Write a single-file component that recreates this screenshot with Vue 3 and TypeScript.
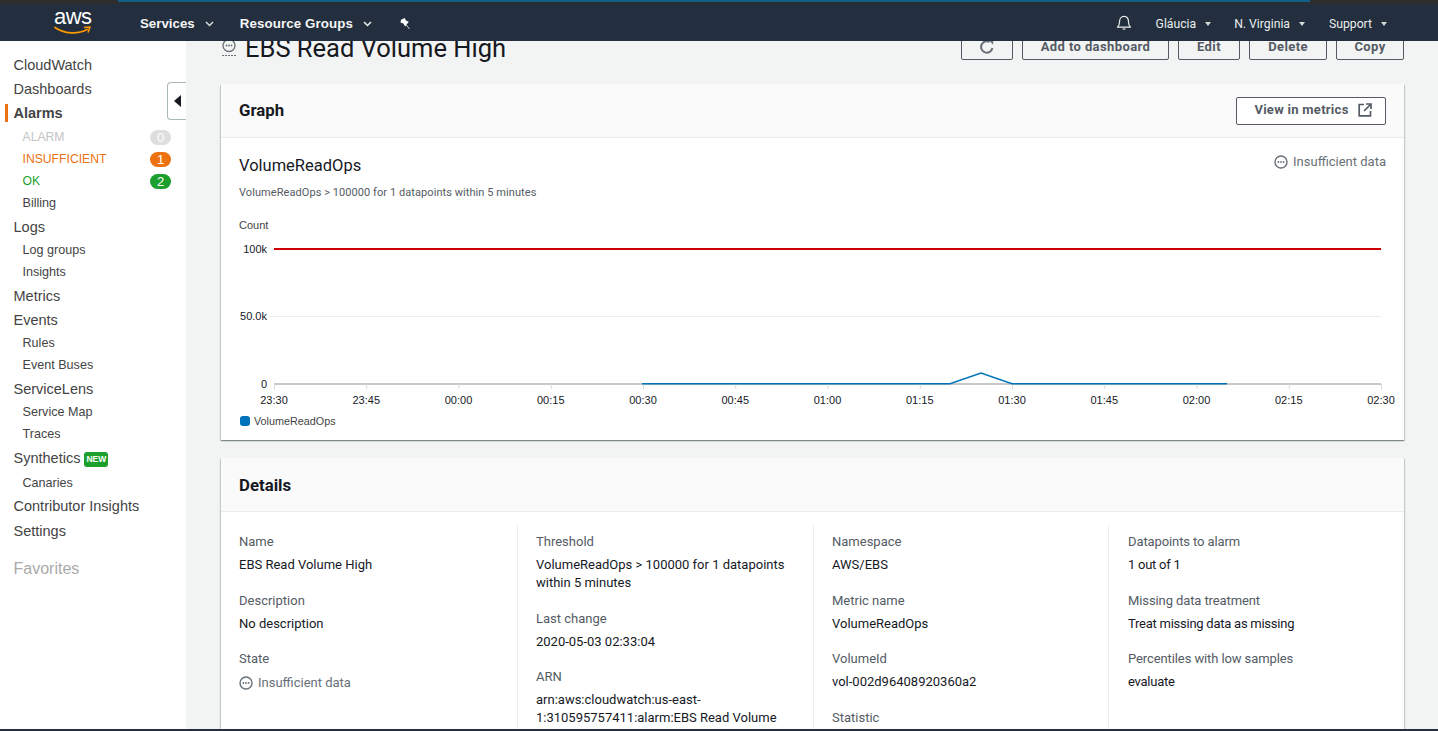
<template>
  <div class="app">
    <div class="topstrip"><div class="blueline"></div></div>
    <header class="nav">
      <div class="logo">
        <span class="logotext">aws</span>
        <svg class="smile" width="38" height="10" viewBox="0 0 38 10">
          <path d="M1 1.500C10 8 24 8.500 33 3.500" fill="none" stroke="#f90" stroke-width="1.800" stroke-linecap="round" />
          <path d="M30 1.500L36 1L34 6.500" fill="none" stroke="#f90" stroke-width="1.600" stroke-linejoin="round" />
        </svg>
      </div>
      <span class="navlink">Services</span>
      <svg class="chev first" width="9" height="6" viewBox="0 0 9 6"><path d="M1 1l3.500 3.500L8 1" fill="none" stroke="#d5dbdb" stroke-width="1.500" /></svg>
      <span class="navlink rg">Resource Groups</span>
      <svg class="chev" width="9" height="6" viewBox="0 0 9 6"><path d="M1 1l3.500 3.500L8 1" fill="none" stroke="#eee" stroke-width="1.500" /></svg>
      <svg class="pin" width="12" height="12" viewBox="0 0 12 12">
        <path d="M2 1.800L5.700 0 7 2.500 9.800 3.800 6.200 8.400 4.300 5.600 1.500 4.500Z" fill="#fff" />
        <path d="M7 6.500l3.500 4.500" stroke="#c8ccd0" stroke-width="1" />
      </svg>
      <div class="navright">
        <svg class="bell" width="16" height="17" viewBox="0 0 16 17">
          <path d="M1.500 13.200c1.500-1.300 2-2.600 2-5.200 0-3 1.600-5.600 4.500-5.600S12.500 5 12.500 8c0 2.600.5 3.900 2 5.200Z" fill="none" stroke="#eaeded" stroke-width="1.200" stroke-linejoin="round" />
          <path d="M6.200 14.500a1.900 1.900 0 0 0 3.600 0Z" fill="#eaeded" />
        </svg>
        <span class="navitem user">Gláucia</span><i class="caret"></i>
        <span class="navitem region">N. Virginia</span><i class="caret"></i>
        <span class="navitem support">Support</span><i class="caret"></i>
      </div>
    </header>

    <div class="body">
      <aside class="side">
        <template v-for="g in sideGroups" :key="g.name">
          <div class="toprow" :class="[g.cls, { active: g.active }]">{{ g.name }}<span v-if="g.isNew" class="newtag">NEW</span></div>
          <div v-if="g.subs" class="sublist">
            <div v-for="s in g.subs" :key="s.name" class="subrow" :class="s.cls">
              <span>{{ s.name }}</span>
              <span v-if="s.count !== undefined" class="count">{{ s.count }}</span>
            </div>
          </div>
        </template>
        <div class="favorites">Favorites</div>
        <button class="collapse"><i></i></button>
      </aside>

      <main class="main">
        <div class="titlerow">
          <svg class="titleicon" width="16" height="20" viewBox="0 0 16 20">
            <circle cx="8" cy="7.500" r="6" fill="none" stroke="#687078" stroke-width="1.300" />
            <circle cx="5.500" cy="7.500" r=".9" fill="#687078" />
            <circle cx="8" cy="7.500" r=".9" fill="#687078" />
            <circle cx="10.500" cy="7.500" r=".9" fill="#687078" />
            <path d="M1 17.500h14" stroke="#687078" stroke-width="1" stroke-dasharray="2 1" />
          </svg>
          <h1>EBS Read Volume High</h1>
          <div class="actions">
            <button class="btn refresh">
              <svg width="16" height="16" viewBox="0 0 16 16">
                <path d="M13.400 9A5.700 5.700 0 1 1 10.500 2.900" fill="none" stroke="#687078" stroke-width="2" />
                <path d="M9 .6h5.200v5.200Z" fill="#687078" />
              </svg>
            </button>
            <button class="btn add">Add to dashboard</button>
            <button class="btn edit">Edit</button>
            <button class="btn del">Delete</button>
            <button class="btn copy">Copy</button>
          </div>
        </div>

        <section class="panel graph">
          <div class="panelhead">
            <h2>Graph</h2>
            <button class="btn metrics">
              View in metrics
              <svg width="14" height="14" viewBox="0 0 14 14">
                <path d="M6 1.500H1.200v11.300h11.300V8" fill="none" stroke="#545b64" stroke-width="1.700" />
                <path d="M6 8l6.500-6.500M8 1h5v5" fill="none" stroke="#545b64" stroke-width="1.700" />
              </svg>
            </button>
          </div>
          <div class="graphbody">
            <div class="charttop">
              <span class="charttitle">VolumeReadOps</span>
              <span class="status">
                <svg class="statusicon" width="14" height="14" viewBox="0 0 14 14">
                  <circle cx="7" cy="7" r="6" fill="none" stroke="#687078" stroke-width="1.400" />
                  <circle cx="4.400" cy="7" r=".9" fill="#687078" />
                  <circle cx="7" cy="7" r=".9" fill="#687078" />
                  <circle cx="9.600" cy="7" r=".9" fill="#687078" />
                </svg>
                Insufficient data
              </span>
            </div>
            <div class="chartsub">VolumeReadOps &gt; 100000 for 1 datapoints within 5 minutes</div>
            <svg class="chart" width="1183" height="210" viewBox="0 0 1183 210">
              <text x="18" y="14" class="axis count">Count</text>
              <text x="46" y="38" class="axis" text-anchor="end">100k</text>
              <text x="46" y="105" class="axis" text-anchor="end">50.0k</text>
              <text x="46" y="173" class="axis" text-anchor="end">0</text>
              <line x1="48" y1="34" x2="53" y2="34" stroke="#eaeded" />
              <line x1="48" y1="101.500" x2="1160" y2="101.500" stroke="#eaeded" />
              <line x1="53" y1="34" x2="1160" y2="34" stroke="#d00000" stroke-width="2" />
              <line x1="53" y1="169" x2="1160" y2="169" stroke="#c9c9c9" stroke-width="2" />
              <g v-for="(t, i) in ticks" :key="t">
                <line :x1="53.500 + i * 92.250" y1="169" :x2="53.500 + i * 92.250" y2="174" stroke="#d5dbdb" />
                <text :x="53 + i * 92.250" y="189" class="axis" text-anchor="middle">{{ t }}</text>
              </g>
              <polyline points="421,168.700 729,168.700 760,158 791,168.700 1006,168.700" fill="none" stroke="#0073bb" stroke-width="1.500" />
            </svg>
            <div class="legend"><i></i>VolumeReadOps</div>
          </div>
        </section>

        <section class="panel details">
          <div class="panelhead"><h2>Details</h2></div>
          <div class="cols">
            <div v-for="(col, i) in columns" :key="i" class="col">
              <div v-for="f in col" :key="f.label" class="field">
                <div class="label">{{ f.label }}</div>
                <div v-if="f.state" class="status value">
                  <svg class="statusicon" width="14" height="14" viewBox="0 0 14 14">
                    <circle cx="7" cy="7" r="6" fill="none" stroke="#687078" stroke-width="1.400" />
                    <circle cx="4.400" cy="7" r=".9" fill="#687078" />
                    <circle cx="7" cy="7" r=".9" fill="#687078" />
                    <circle cx="9.600" cy="7" r=".9" fill="#687078" />
                  </svg>
                  {{ f.value }}
                </div>
                <div v-else class="value">{{ f.value }}</div>
              </div>
            </div>
          </div>
        </section>
      </main>
    </div>
    <div class="bottomstrip"></div>
  </div>
</template>

<script setup lang="ts">
type Sub = { name: string; cls?: string; count?: number }
type Group = { name: string; cls?: string; active?: boolean; isNew?: boolean; subs?: Sub[] }
type Field = { label: string; value: string; state?: boolean }

const sideGroups: Group[] = [
  { name: 'CloudWatch' },
  { name: 'Dashboards' },
  {
    name: 'Alarms',
    active: true,
    subs: [
      { name: 'ALARM', cls: 'muted', count: 0 },
      { name: 'INSUFFICIENT', cls: 'orange', count: 1 },
      { name: 'OK', cls: 'green', count: 2 },
      { name: 'Billing' },
    ],
  },
  { name: 'Logs', cls: 'pushed', subs: [{ name: 'Log groups' }, { name: 'Insights' }] },
  { name: 'Metrics' },
  { name: 'Events', subs: [{ name: 'Rules' }, { name: 'Event Buses' }] },
  { name: 'ServiceLens', subs: [{ name: 'Service Map' }, { name: 'Traces' }] },
  { name: 'Synthetics', cls: 'spaced', isNew: true, subs: [{ name: 'Canaries' }] },
  { name: 'Contributor Insights' },
  { name: 'Settings', cls: 'pushed' },
]

const ticks = ['23:30', '23:45', '00:00', '00:15', '00:30', '00:45', '01:00', '01:15', '01:30', '01:45', '02:00', '02:15', '02:30']

const columns: Field[][] = [
  [
    { label: 'Name', value: 'EBS Read Volume High' },
    { label: 'Description', value: 'No description' },
    { label: 'State', value: 'Insufficient data', state: true },
  ],
  [
    { label: 'Threshold', value: 'VolumeReadOps > 100000 for 1 datapoints within 5 minutes' },
    { label: 'Last change', value: '2020-05-03 02:33:04' },
    { label: 'ARN', value: 'arn:aws:cloudwatch:us-east-1:310595757411:alarm:EBS Read Volume High' },
  ],
  [
    { label: 'Namespace', value: 'AWS/EBS' },
    { label: 'Metric name', value: 'VolumeReadOps' },
    { label: 'VolumeId', value: 'vol-002d96408920360a2' },
    { label: 'Statistic', value: 'Sum' },
  ],
  [
    { label: 'Datapoints to alarm', value: '1 out of 1' },
    { label: 'Missing data treatment', value: 'Treat missing data as missing' },
    { label: 'Percentiles with low samples', value: 'evaluate' },
  ],
]
</script>

<style>
html,
body {
  margin: 0;
  height: 100%;
  overflow: hidden;
}
</style>

<style scoped>
.app {
  display: flex;
  flex-direction: column;
  height: 731px;
  overflow: hidden;
  font-family: Roboto, "Liberation Sans", sans-serif;
  color: #16191f;
}
.topstrip {
  height: 4px;
  background: #2e2e2e;
  flex: none;
}
.blueline {
  height: 2px;
  margin: 0 128px 0 118px;
  background: #0f5f8a;
}
.bottomstrip {
  flex: none;
  height: 2px;
  background: #232f3e;
}
.nav {
  flex: none;
  height: 37px;
  background: #232f3e;
  display: flex;
  align-items: center;
  color: #fff;
  position: relative;
  z-index: 2;
}
.logo {
  width: 140px;
  height: 37px;
  position: relative;
  flex: none;
}
.logotext {
  position: absolute;
  left: 54px;
  top: 2px;
  font: 22px/22px "Liberation Sans", sans-serif;
  letter-spacing: -0.5px;
  color: #fff;
}
.smile {
  position: absolute;
  left: 54px;
  top: 22px;
}
.navlink {
  padding-top: 2px;
  font: 700 13.300px "Liberation Sans", sans-serif;
  color: #f5f5f5;
}
.navlink.rg {
  letter-spacing: 0.12px;
}
.chev {
  margin: 2px 0 0 10px;
}
.chev.first {
  margin-right: 26px;
}
.pin {
  margin: 3px 0 0 27px;
}
.navright {
  margin-left: auto;
  display: flex;
  align-items: center;
  padding: 2px 51px 0 0;
  font-size: 12.200px;
}
.bell {
  margin: -2px 24px 0 0;
}
.navitem {
  color: #eaeded;
}
.caret {
  width: 0;
  height: 0;
  margin: 1px 0 0 9px;
  border-left: 3.500px solid transparent;
  border-right: 3.500px solid transparent;
  border-top: 4px solid #d5dbdb;
}
.region {
  margin-left: 23px;
}
.support {
  margin-left: 24px;
}
.body {
  flex: 1;
  min-height: 0;
  display: flex;
}
.side {
  position: relative;
  width: 186px;
  flex: none;
  background: #fff;
  padding-top: 12px;
  box-sizing: border-box;
  font-family: "Liberation Sans", sans-serif;
  color: #444;
}
.toprow {
  position: relative;
  height: 24px;
  line-height: 24px;
  padding-left: 13.500px;
  font-size: 14.500px;
  color: #444;
}
.toprow.active {
  font-weight: 700;
  margin-bottom: 1px;
}
.toprow.pushed {
  margin-top: 1px;
}
.toprow.spaced {
  margin-bottom: 2px;
}
.toprow.spaced + .sublist {
  margin-bottom: 0;
}
.toprow.active::before {
  content: "";
  position: absolute;
  left: 5px;
  top: 3px;
  width: 3px;
  height: 18px;
  background: #ec7211;
}
.newtag {
  display: inline-block;
  margin-left: 4px;
  padding: 0 2px;
  height: 15px;
  line-height: 15px;
  vertical-align: 1px;
  border-radius: 3px;
  background: #1d9f2e;
  color: #fff;
  font-size: 8.500px;
  font-weight: 700;
}
.sublist {
  margin-bottom: 1px;
}
.subrow {
  height: 22px;
  padding: 0 15px 0 22.500px;
  display: flex;
  align-items: center;
  justify-content: space-between;
  font-size: 12.600px;
  color: #444;
}
.subrow.muted {
  color: #c4c4c4;
  font-size: 12.200px;
}
.subrow.orange {
  color: #ec7211;
  font-size: 12.200px;
}
.subrow.green {
  color: #1d9f2e;
  font-size: 12.200px;
}
.count {
  width: 21px;
  height: 15px;
  line-height: 15px;
  border-radius: 8px;
  text-align: center;
  color: #fff;
  font-size: 13px;
}
.muted .count {
  background: #dedede;
}
.orange .count {
  background: #ec7211;
}
.green .count {
  background: #1d9f2e;
}
.favorites {
  margin-top: 14px;
  height: 24px;
  line-height: 24px;
  padding-left: 13.500px;
  font-size: 16px;
  color: #aaa;
}
.collapse {
  position: absolute;
  left: 167px;
  top: 41px;
  width: 19px;
  height: 38px;
  padding: 0;
  background: #fff;
  border: 1px solid #aab7b8;
  border-right: none;
  border-radius: 4px 0 0 4px;
}
.collapse i {
  display: block;
  width: 0;
  height: 0;
  margin-left: 6px;
  border-top: 6px solid transparent;
  border-bottom: 6px solid transparent;
  border-right: 7px solid #16191f;
}
.main {
  flex: 1;
  min-width: 0;
  background: #f2f3f3;
  padding: 0 34px 0 35px;
  overflow: hidden;
}
.titlerow {
  display: flex;
  align-items: center;
  height: 27px;
  margin-top: -8px;
  margin-bottom: 24px;
}
.titleicon {
  margin: 3px 8px 0 0;
  flex: none;
}
h1 {
  margin: 0;
  padding-top: 3px;
  font-size: 25.500px;
  font-weight: 400;
  color: #16191f;
  white-space: nowrap;
}
.actions {
  margin-left: auto;
  display: flex;
  gap: 9px;
}
.btn {
  height: 27px;
  box-sizing: border-box;
  padding: 0;
  background: #fff;
  border: 1px solid #545b64;
  border-radius: 2px;
  color: #545b64;
  font-family: Roboto, "Liberation Sans", sans-serif;
  font-size: 13px;
  font-weight: 700;
  letter-spacing: 0.4px;
  display: flex;
  align-items: center;
  justify-content: center;
  gap: 9px;
}
.actions .btn {
  background: transparent;
}
.refresh {
  width: 52px;
}
.add {
  width: 147px;
}
.edit {
  width: 62px;
}
.del {
  width: 78px;
}
.copy {
  width: 68px;
}
.metrics {
  width: 150px;
  height: 28px;
  padding: 0 0 2px 4px;
  letter-spacing: 0.28px;
}
.panel {
  background: #fff;
  box-shadow: 0 1px 1px 0 rgba(0, 28, 36, 0.3), 1px 1px 1px 0 rgba(0, 28, 36, 0.15), -1px 1px 1px 0 rgba(0, 28, 36, 0.15);
}
.panelhead {
  height: 54px;
  box-sizing: border-box;
  padding: 0 18px;
  display: flex;
  align-items: center;
  justify-content: space-between;
  background: #fafafa;
  border-bottom: 1px solid #eaeded;
}
h2 {
  margin: 0;
  font-size: 16.800px;
  font-weight: 700;
  color: #16191f;
}
.graph h2 {
  margin-top: -2px;
}
.graph {
  height: 356px;
  margin-bottom: 18px;
}
.graphbody {
  position: relative;
}
.charttop {
  display: flex;
  justify-content: space-between;
  align-items: flex-start;
  padding: 17px 18px 0;
  height: 46px;
  box-sizing: border-box;
}
.charttitle {
  font-size: 16.500px;
  line-height: 22px;
}
.charttop .status {
  margin-top: -2px;
}
.status {
  display: flex;
  align-items: center;
  gap: 5px;
  font-size: 13px;
  line-height: 18px;
  color: #687078;
}
.chartsub {
  padding-left: 18px;
  font-size: 11px;
  letter-spacing: 0.07px;
  line-height: 18px;
  color: #545b64;
  height: 31px;
}
.chart {
  display: block;
  font-family: "Liberation Sans", sans-serif;
}
.axis {
  font-size: 11px;
  fill: #16191f;
}
.axis.count {
  fill: #444;
}
.legend {
  display: flex;
  align-items: center;
  padding-left: 19px;
  margin-top: -11px;
  font: 10.800px/14px "Liberation Sans", sans-serif;
  color: #444;
}
.legend i {
  width: 10px;
  height: 10px;
  margin-right: 4px;
  border-radius: 3px;
  background: #0073bb;
}
.cols {
  display: grid;
  grid-template-columns: 278px 296px 295px 1fr;
  margin: 13px 18px 0;
}
.col {
  padding: 3px 0 0 18px;
  border-left: 1px solid #eaeded;
}
.col:first-child {
  padding-left: 0;
  border-left: none;
}
.col:nth-child(2) {
  padding-right: 18px;
}
.col:last-child {
  padding-left: 19px;
}
.col:last-child .label {
  letter-spacing: -0.1px;
}
.col:last-child .value {
  letter-spacing: -0.25px;
}
.field {
  margin-bottom: 12.500px;
}
.label {
  height: 28px;
  line-height: 28px;
  font-size: 13px;
  color: #545b64;
}
.value {
  font-size: 13px;
  line-height: 18px;
  color: #16191f;
}
.value.status {
  color: #687078;
  position: relative;
  top: 1px;
}
</style>
